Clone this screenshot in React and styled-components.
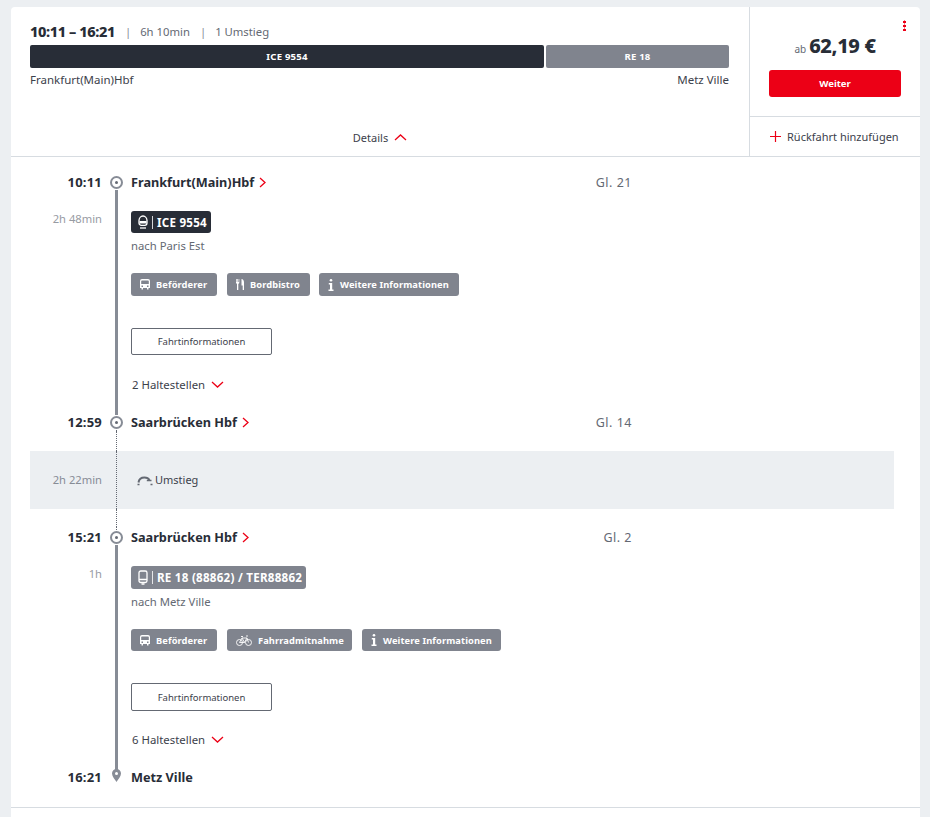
import React from "react";
import styled, { createGlobalStyle } from "styled-components";

const Global = createGlobalStyle`
  html, body { margin: 0; padding: 0; background: #eceff2; }
  body { font-family: "Noto Sans", "Open Sans", sans-serif; color: #282d37; }
  #root { height: 817px; overflow: hidden; padding: 7px 10px 0 11px; box-sizing: border-box; }
  * { box-sizing: border-box; }
`;

const Card = styled.main`
  background: #fff;
  border-radius: 4px 4px 0 0;
  height: 810px;
`;
const Header = styled.header`
  display: grid;
  grid-template-columns: 739px 170px;
  height: 150px;
  border-bottom: 1px solid #d7dce1;
`;
const Overview = styled.section`
  display: flex;
  flex-direction: column;
  padding: 16px 20px 0 19px;
  border-right: 1px solid #d7dce1;
`;
const Summary = styled.div`
  display: flex;
  align-items: center;
  height: 16px;
  margin-bottom: 6px;
  font-size: 11.3px;
  color: #646973;
`;
const Span = styled.strong`
  font-size: 14.5px;
  font-weight: 800;
  color: #282d37;
  letter-spacing: -0.4px;
`;
const Sep = styled.span`
  margin: 0 9px 0 10px;
  color: #878c96;
`;
const Bar = styled.div`
  display: grid;
  grid-template-columns: 514px 183px;
  gap: 2px;
  height: 23px;
`;
const BarPart = styled.div`
  display: flex;
  align-items: center;
  justify-content: center;
  border-radius: 2px;
  background: ${(p) => (p.$muted ? "#80848e" : "#282d37")};
  color: #fff;
  font-size: 9.6px;
  font-weight: 700;
  letter-spacing: 0.2px;
`;
const Ends = styled.div`
  display: flex;
  justify-content: space-between;
  margin-top: 4px;
  font-size: 11.5px;
  line-height: 16px;
  color: #3c414b;
`;
const DetailsToggle = styled.div`
  display: flex;
  align-items: center;
  justify-content: center;
  gap: 6px;
  margin: 41px 0 0 1px;
  height: 16px;
  font-size: 11px;
  color: #3c414b;
`;
const PriceCol = styled.aside`
  display: grid;
  grid-template-rows: 110px 1fr;
`;
const PriceBox = styled.div`
  position: relative;
  display: flex;
  flex-direction: column;
  align-items: center;
  padding-top: 25px;
  border-bottom: 1px solid #d7dce1;
`;
const Kebab = styled.span`
  position: absolute;
  top: 13px;
  right: 14px;
  width: 3px;
  height: 11px;
  background: radial-gradient(circle, #ec0016 1.4px, transparent 1.6px) 0 0 / 3px 4px repeat-y;
`;
const Price = styled.div`
  display: flex;
  align-items: baseline;
  gap: 3px;
  height: 30px;
  font-size: 10px;
  color: #646973;
`;
const Amount = styled.strong`
  font-size: 20px;
  font-weight: 800;
  color: #282d37;
  letter-spacing: -0.35px;
`;
const Continue = styled.button`
  width: 132px;
  height: 27px;
  margin-top: 8px;
  border: 0;
  border-radius: 3px;
  background: #ec0016;
  color: #fff;
  font: 700 9.5px "Noto Sans", sans-serif;
`;
const AddReturn = styled.div`
  display: flex;
  align-items: center;
  gap: 6px;
  padding-left: 20px;
  font-size: 11px;
  color: #3c414b;
  white-space: nowrap;
`;
const Timeline = styled.div`
  padding-top: 15px;
  border-bottom: 1px solid #d7dce1;
  padding-bottom: 20px;
`;
const Row = styled.div`
  display: grid;
  grid-template-columns: 91px 29px 1fr;
  min-height: ${(p) => p.$h || 20}px;
`;
const Time = styled.div`
  text-align: right;
  align-self: center;
  font-size: 13px;
  font-weight: 700;
  letter-spacing: 0.2px;
  line-height: 20px;
  color: #282d37;
`;
const Duration = styled.div`
  text-align: right;
  font-size: 11.2px;
  line-height: 16px;
  color: ${(p) => (p.$band ? "#878c96" : "#979ba3")};
  padding-top: ${(p) => (p.$band ? 0 : 19)}px;
  align-self: ${(p) => (p.$band ? "center" : "start")};
`;
const Rail = styled.div`
  display: flex;
  flex-direction: column;
  align-items: center;
`;
const Solid = styled.span`
  flex: 1;
  width: 3px;
  background: ${(p) => (p.$none ? "transparent" : "#878c96")};
`;
const Dotted = styled.span`
  flex: 1;
  width: 1px;
  border-left: 1px dotted #646973;
`;
const StopDot = styled.span`
  display: flex;
  align-items: center;
  justify-content: center;
  flex: none;
  width: 13px;
  height: 13px;
  margin: 1px 0;
  border: 2px solid #878c96;
  border-radius: 50%;
  &::after {
    content: "";
    width: 3px;
    height: 3px;
    border-radius: 50%;
    background: #646973;
  }
`;
const PinIcon = styled.svg`
  flex: none;
  width: 9px;
  height: 13px;
  margin: -1px 0 3px;
`;
const StopBody = styled.div`
  display: flex;
  justify-content: space-between;
  align-items: center;
  width: 501px;
`;
const StopName = styled.span`
  display: flex;
  align-items: center;
  gap: 5px;
  font-size: 12.7px;
  font-weight: 700;
  color: #282d37;
`;
const Track = styled.span`
  font-size: 12.5px;
  letter-spacing: 0.5px;
  color: #646973;
`;
const Segment = styled.div`
  padding: 19px 0 19px;
`;
const LineBadge = styled.div`
  display: inline-flex;
  align-items: center;
  height: ${(p) => p.$h}px;
  padding: 0 4px 0 7px;
  border-radius: 3px;
  background: ${(p) => (p.$muted ? "#80848e" : "#282d37")};
  color: #fff;
  font-size: 11.6px;
  font-weight: 700;
  letter-spacing: 0.25px;
  vertical-align: top;
`;
const BadgeRule = styled.span`
  width: 1px;
  height: 13px;
  margin: 0 4px 0 4px;
  background: #fff;
  opacity: 0.8;
`;
const Direction = styled.div`
  margin-top: 5px;
  font-size: 11.3px;
  line-height: 16px;
  color: #646973;
`;
const Tags = styled.div`
  display: flex;
  margin-top: 19px;
`;
const Tag = styled.div`
  display: flex;
  align-items: center;
  gap: 6px;
  width: ${(p) => p.$w}px;
  height: ${(p) => p.$h}px;
  margin-right: ${(p) => p.$gap}px;
  padding-left: 9px;
  border-radius: 3px;
  background: #80848e;
  color: #fff;
  font-size: 9.3px;
  font-weight: 700;
  letter-spacing: 0.1px;
  white-space: nowrap;
`;
const TagIcon = styled.span`
  display: flex;
  justify-content: center;
  width: ${(p) => p.$w}px;
`;
const InfoButton = styled.button`
  display: block;
  width: 141px;
  height: ${(p) => p.$h}px;
  margin-top: ${(p) => p.$mt}px;
  background: #fff;
  border: 1px solid #646973;
  border-radius: 2px;
  color: #3c414b;
  font: 400 9.5px "Noto Sans", sans-serif;
`;
const Stops = styled.div`
  display: flex;
  align-items: center;
  gap: 6px;
  margin: ${(p) => p.$mt}px 0 0 1px;
  font-size: 11.4px;
  line-height: 16px;
  color: #3c414b;
`;
const Band = styled.div`
  display: grid;
  grid-template-columns: 72px 29px 1fr;
  height: 58px;
  margin: 0 26px 0 19px;
  background: #eceff2;
`;
const Change = styled.div`
  display: flex;
  align-items: center;
  gap: 2px;
  padding: 0 0 1px 6px;
  font-size: 11px;
  color: #3c414b;
`;

const Chev = ({ dir }) => {
  const paths = {
    right: "M1 1l5 4.500L1 10",
    up: "M1 7l5.500-5 5.500 5",
    down: "M1 1l5.500 5 5.500-5",
  };
  const s = dir === "right" ? [7, 11] : [13, 8];
  return (
    <svg width={s[0]} height={s[1]} viewBox={`0 0 ${s[0]} ${s[1]}`} fill="none" stroke="#ec0016" strokeWidth="1.3">
      <path d={paths[dir]} />
    </svg>
  );
};

const Plus = () => (
  <svg width="11" height="11" viewBox="0 0 11 11" stroke="#ec0016" strokeWidth="1.2">
    <path d="M5.500 0v11M0 5.500h11" />
  </svg>
);

const TrainHead = () => (
  <svg width="10" height="14" viewBox="0 0 10 14" fill="none" stroke="#fff" strokeWidth="1.3">
    <path d="M1 5.500C1 3 2.800 1 5 1s4 2 4 4.500V8c0 1.300-1 2.300-2.300 2.300H3.300C2 10.300 1 9.300 1 8z" />
    <path d="M1.500 6h7v2.500h-7z" fill="#fff" stroke="none" />
    <path d="M2 13h6" />
  </svg>
);
const Regio = () => (
  <svg width="10" height="15" viewBox="0 0 10 15" fill="none" stroke="#fff" strokeWidth="1.3">
    <rect x="1" y="1" width="8" height="11.500" rx="1.800" />
    <path d="M1 9.500h8M3.500 14h3" />
  </svg>
);
const Bus = () => (
  <svg width="10" height="11" viewBox="0 0 10 11" fill="#fff">
    <path d="M2 0h6a2 2 0 0 1 2 2v7H8.500v1.500h-1.500V9H3v1.500H1.500V9H0V2a2 2 0 0 1 2-2zm0 1.500a.8.8 0 0 0-.8.800V5h7.600V2.300a.8.8 0 0 0-.8-.8zM1.500 6.500V8h1.500V6.500zm5.500 0V8h1.500V6.500z" />
  </svg>
);
const Cutlery = () => (
  <svg width="8" height="11" viewBox="0 0 8 11" fill="#fff">
    <path d="M0 0h.7v3h.6V0H2v3h.6V0h.7v4L2.300 5v6H1V5L0 4zM5.500 0C7 0 8 1.500 8 3.500V11H6.700V6.500H5.500z" />
  </svg>
);
const Info = () => (
  <svg width="6" height="12" viewBox="0 0 6 12" fill="#fff">
    <circle cx="3" cy="1.300" r="1.300" />
    <path d="M.8 4h3.400v6.500H5.500V12H.5v-1.500h1.500V5.500H.8z" />
  </svg>
);
const Bike = () => (
  <svg width="16" height="11" viewBox="0 0 16 11" fill="none" stroke="#fff" strokeWidth="0.9">
    <circle cx="3.500" cy="7.500" r="3" />
    <circle cx="12.500" cy="7.500" r="3" />
    <path d="M3.500 7.500L6 3h5l1.500 4.500M6 3l2.500 4.500H3.500M11 3l-2.500 4.500M5 1.500h2M10 1h2" />
  </svg>
);
const ChangeIcon = () => (
  <svg width="16" height="12" viewBox="0 0 16 12" fill="none" stroke="#646973">
    <path d="M1.500 8.500C2 5 4.500 3.500 7.500 3.500c2.500 0 4 .8 5 2.500" strokeWidth="2" />
    <path d="M9.800 6.500h4.700" strokeWidth="1.500" />
    <path d="M.5 10.500h2M13.500 10.500h2" strokeWidth="1.500" />
  </svg>
);

const Tags1 = [
  { label: "Beförderer", w: 86, gap: 10, icon: <Bus />, iw: 10 },
  { label: "Bordbistro", w: 83, gap: 9, icon: <Cutlery />, iw: 8 },
  { label: "Weitere Informationen", w: 140, gap: 0, icon: <Info />, iw: 6 },
];
const Tags2 = [
  { label: "Beförderer", w: 86, gap: 10, icon: <Bus />, iw: 10 },
  { label: "Fahrradmitnahme", w: 125, gap: 10, icon: <Bike />, iw: 16 },
  { label: "Weitere Informationen", w: 139, gap: 0, icon: <Info />, iw: 6 },
];

const StopRow = ({ time, name, track, top, bottom, pin, link = true }) => (
  <Row>
    <Time>{time}</Time>
    <Rail>
      {top === "solid" && <Solid />}
      {top === "dotted" && <Dotted />}
      {!top && <Solid $none />}
      {pin ? (
        <PinIcon viewBox="0 0 9 13">
          <path d="M4.500 0A4.500 4.500 0 0 1 9 4.500C9 7.500 6 10.500 4.500 13 3 10.500 0 7.500 0 4.500A4.500 4.500 0 0 1 4.500 0z" fill="#878c96" />
          <circle cx="4.500" cy="4.500" r="1.500" fill="#fff" />
        </PinIcon>
      ) : (
        <StopDot />
      )}
      {bottom === "solid" && <Solid />}
      {bottom === "dotted" && <Dotted />}
      {!bottom && <Solid $none />}
    </Rail>
    <StopBody>
      <StopName>
        {name}
        {link && <Chev dir="right" />}
      </StopName>
      {track && <Track>{track}</Track>}
    </StopBody>
  </Row>
);

const SegmentRow = ({ duration, line, muted, icon, direction, tags, badgeH, tagH, btnH, stopsMt, stops }) => (
  <Row>
    <Duration>{duration}</Duration>
    <Rail>
      <Solid />
    </Rail>
    <Segment>
      <LineBadge $h={badgeH} $muted={muted}>
        {icon}
        <BadgeRule />
        {line}
      </LineBadge>
      <Direction>{direction}</Direction>
      <Tags>
        {tags.map((t) => (
          <Tag key={t.label} $w={t.w} $gap={t.gap} $h={tagH}>
            <TagIcon $w={t.iw}>{t.icon}</TagIcon>
            {t.label}
          </Tag>
        ))}
      </Tags>
      <InfoButton $h={btnH} $mt={32}>Fahrtinformationen</InfoButton>
      <Stops $mt={stopsMt}>
        {stops} Haltestellen
        <Chev dir="down" />
      </Stops>
    </Segment>
  </Row>
);

export default function App() {
  return (
    <>
      <Global />
      <Card>
        <Header>
          <Overview>
            <Summary>
              <Span>10:11 – 16:21</Span>
              <Sep>|</Sep>
              6h 10min
              <Sep>|</Sep>
              1 Umstieg
            </Summary>
            <Bar>
              <BarPart>ICE 9554</BarPart>
              <BarPart $muted>RE 18</BarPart>
            </Bar>
            <Ends>
              <span>Frankfurt(Main)Hbf</span>
              <span>Metz Ville</span>
            </Ends>
            <DetailsToggle>
              Details
              <Chev dir="up" />
            </DetailsToggle>
          </Overview>
          <PriceCol>
            <PriceBox>
              <Kebab />
              <Price>
                ab <Amount>62,19 €</Amount>
              </Price>
              <Continue>Weiter</Continue>
            </PriceBox>
            <AddReturn>
              <Plus />
              Rückfahrt hinzufügen
            </AddReturn>
          </PriceCol>
        </Header>
        <Timeline>
          <StopRow time="10:11" name="Frankfurt(Main)Hbf" track="Gl. 21" bottom="solid" />
          <SegmentRow
            duration="2h 48min"
            line="ICE 9554"
            icon={<TrainHead />}
            direction="nach Paris Est"
            tags={Tags1}
            badgeH={22}
            tagH={23}
            btnH={27}
            stopsMt={22}
            stops={2}
          />
          <StopRow time="12:59" name="Saarbrücken Hbf" track="Gl. 14" top="solid" bottom="dotted" />
          <Row $h={19}>
            <span />
            <Rail><Dotted /></Rail>
          </Row>
          <Band>
            <Duration $band>2h 22min</Duration>
            <Rail><Dotted /></Rail>
            <Change>
              <ChangeIcon />
              Umstieg
            </Change>
          </Band>
          <Row $h={18}>
            <span />
            <Rail><Dotted /></Rail>
          </Row>
          <StopRow time="15:21" name="Saarbrücken Hbf" track="Gl. 2" top="dotted" bottom="solid" />
          <SegmentRow
            duration="1h"
            line="RE 18 (88862) / TER88862"
            muted
            icon={<Regio />}
            direction="nach Metz Ville"
            tags={Tags2}
            badgeH={23}
            tagH={22}
            btnH={28}
            stopsMt={21}
            stops={6}
          />
          <StopRow time="16:21" name="Metz Ville" top="solid" pin link={false} />
        </Timeline>
      </Card>
    </>
  );
}
